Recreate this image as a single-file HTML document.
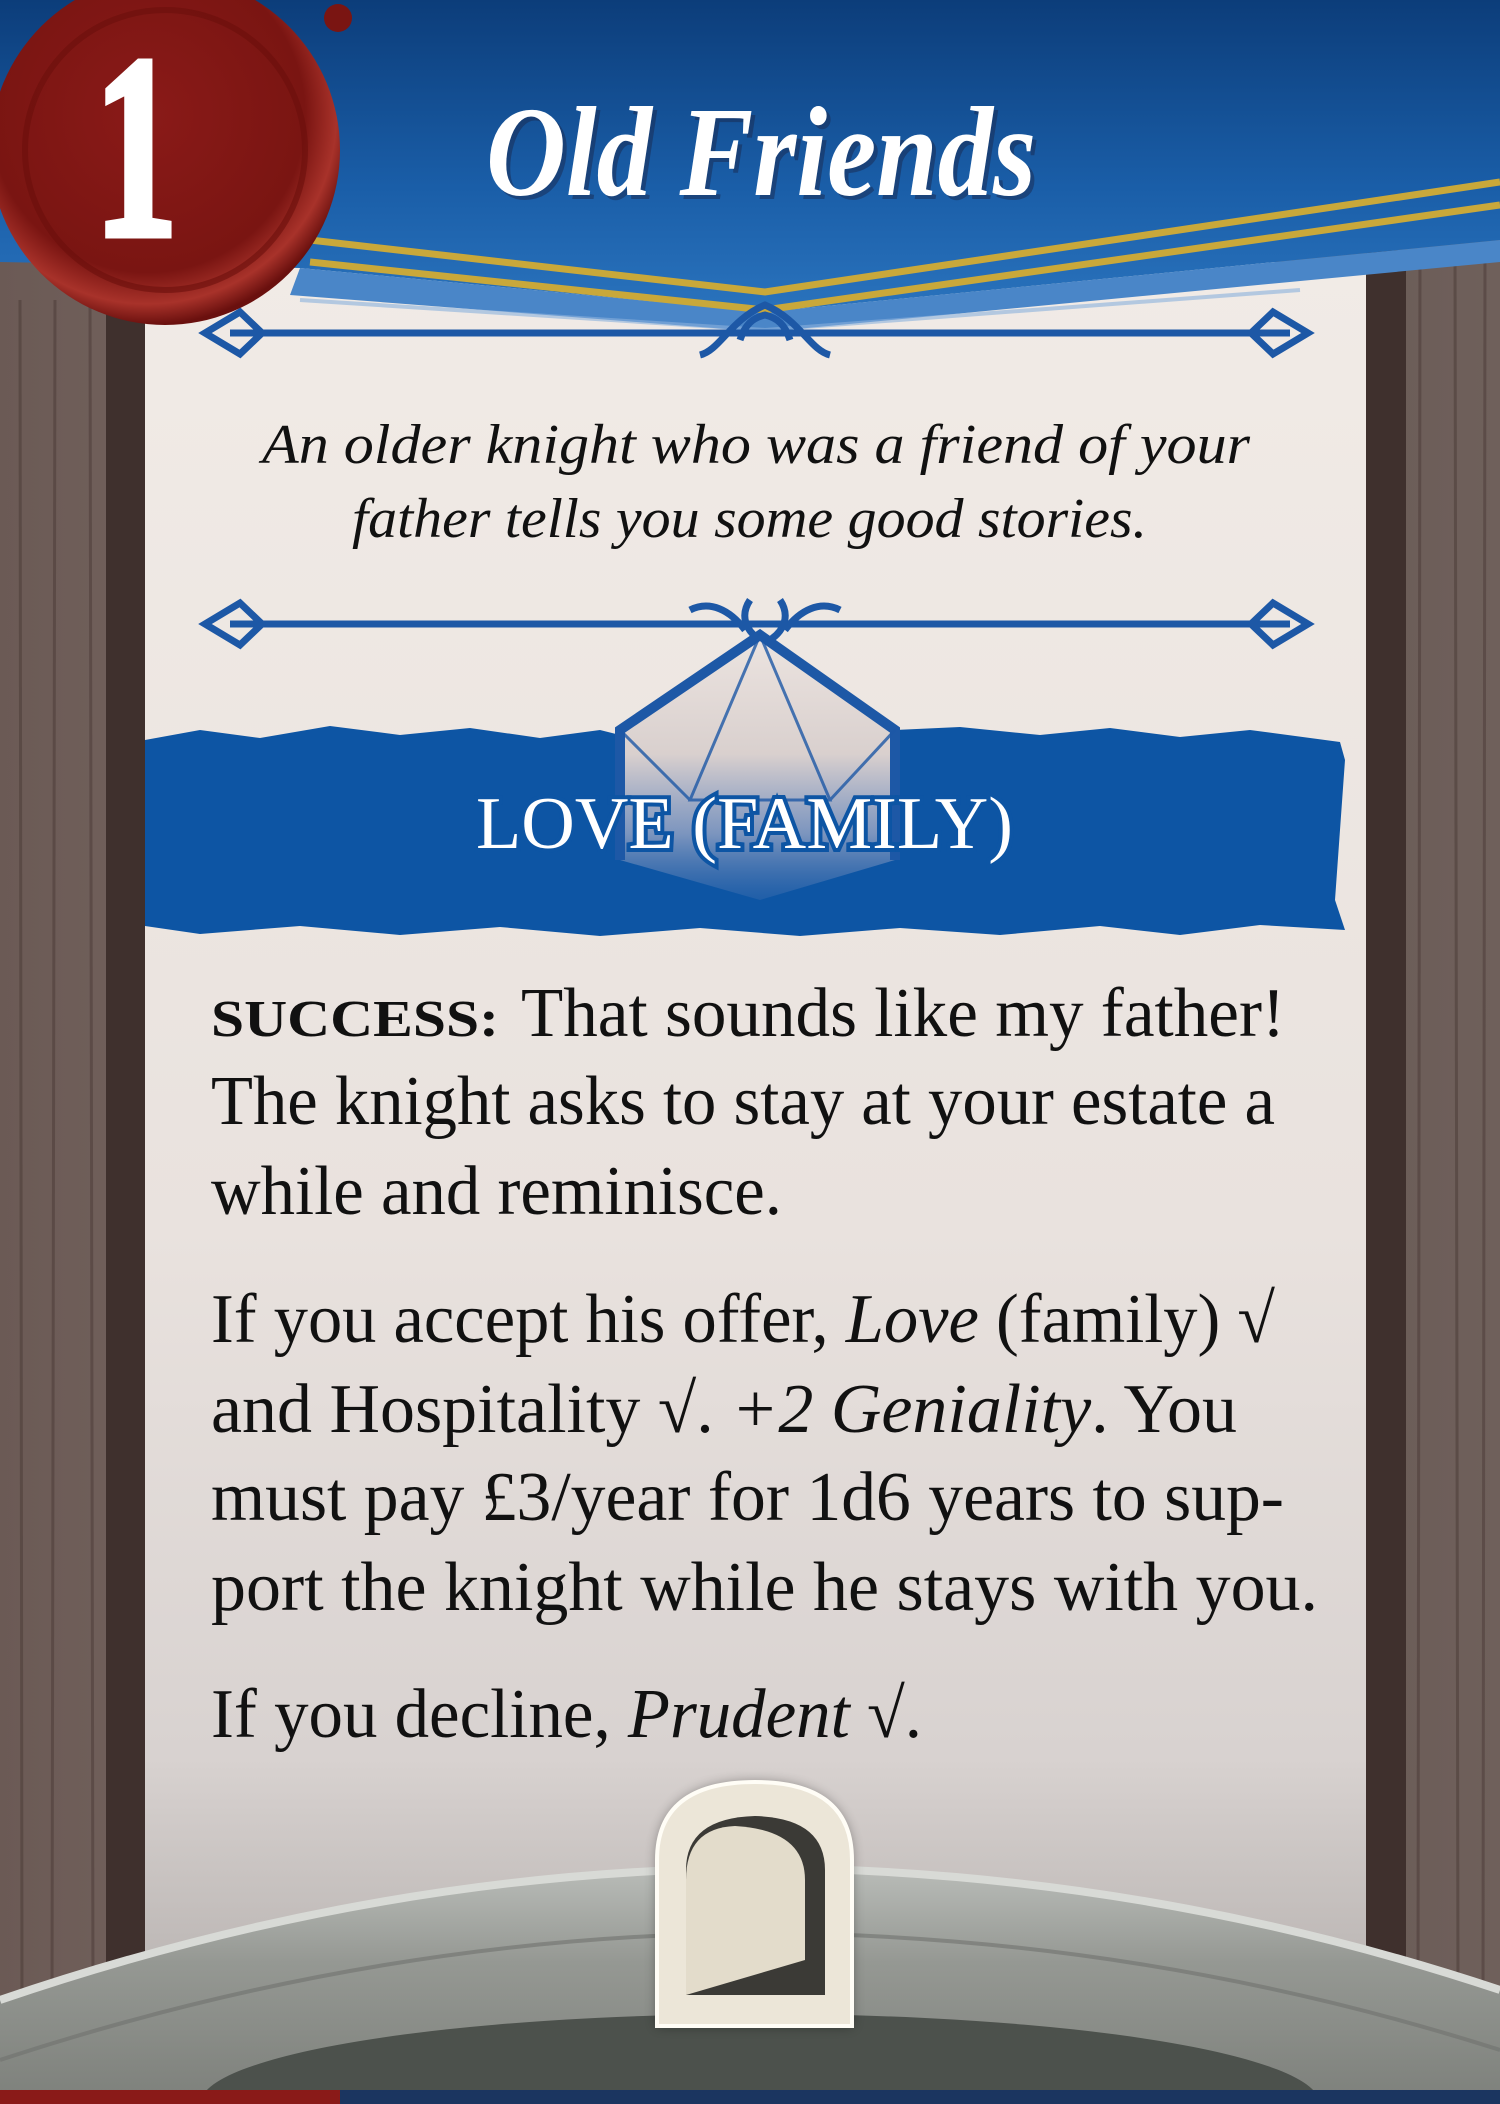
<!DOCTYPE html>
<html><head><meta charset="utf-8"><style>
html,body{margin:0;padding:0;background:#4a3d3a;}
svg{display:block}
</style></head><body>
<svg width="1500" height="2104" viewBox="0 0 1500 2104" xmlns="http://www.w3.org/2000/svg">
<defs>
<linearGradient id="wood" x1="0" x2="1" y1="0" y2="0">
<stop offset="0" stop-color="#6b5a55"/><stop offset="0.3" stop-color="#7d6d68"/><stop offset="0.6" stop-color="#5e4f4b"/><stop offset="1" stop-color="#6f605b"/>
</linearGradient>
<linearGradient id="parch" x1="0" x2="0" y1="0" y2="1">
<stop offset="0" stop-color="#f1ebe6"/><stop offset="0.55" stop-color="#e9e2de"/><stop offset="0.85" stop-color="#d8d2d0"/><stop offset="1" stop-color="#b5b0ae"/>
</linearGradient>
<linearGradient id="blue" x1="0" x2="0" y1="0" y2="1">
<stop offset="0" stop-color="#0c3d7a"/><stop offset="0.6" stop-color="#1a5ea8"/><stop offset="1" stop-color="#2a73bd"/>
</linearGradient>
<radialGradient id="seal" cx="0.45" cy="0.4" r="0.6">
<stop offset="0" stop-color="#8a1a18"/><stop offset="0.75" stop-color="#7a1512"/><stop offset="0.9" stop-color="#a8322a"/><stop offset="1" stop-color="#6a100e"/>
</radialGradient>
<linearGradient id="metal" x1="0" x2="0" y1="0" y2="1">
<stop offset="0" stop-color="#b9bcb8"/><stop offset="0.4" stop-color="#959893"/><stop offset="1" stop-color="#7d807b"/>
</linearGradient>
<linearGradient id="die" x1="0" x2="0" y1="0" y2="1">
<stop offset="0" stop-color="#ece4e0"/><stop offset="0.45" stop-color="#d9d0ce"/><stop offset="0.75" stop-color="#c6c0d0" stop-opacity="0.6"/><stop offset="1" stop-color="#6a84b8" stop-opacity="0.2"/>
</linearGradient>
<filter id="sh" x="-20%" y="-20%" width="140%" height="140%"><feGaussianBlur stdDeviation="6"/></filter>
</defs>

<!-- wood -->
<rect x="0" y="0" width="1500" height="2104" fill="url(#wood)"/>
<g stroke="#4a3a36" stroke-width="3" opacity="0.5">
<line x1="20" y1="300" x2="22" y2="2000"/><line x1="55" y1="300" x2="52" y2="2000"/><line x1="90" y1="300" x2="93" y2="2000"/>
<line x1="1420" y1="250" x2="1418" y2="2000"/><line x1="1455" y1="250" x2="1458" y2="2000"/><line x1="1485" y1="250" x2="1483" y2="2000"/>
</g>
<rect x="106" y="280" width="40" height="1700" fill="#3f302d"/>
<rect x="1366" y="250" width="40" height="1750" fill="#3f302d"/>

<!-- parchment -->
<rect x="145" y="262" width="1221" height="1760" fill="url(#parch)"/>

<!-- blue header -->
<path d="M0 0 H1500 V240 L765 312 L300 268 L0 262 Z" fill="url(#blue)"/>
<path d="M300 268 L765 312 L1500 240 V262 L765 332 L290 295 Z" fill="#4a86c8"/>
<path d="M310 240 L765 292 L1500 182" fill="none" stroke="#c9a83a" stroke-width="7"/>
<path d="M310 262 L765 310 L1500 205" fill="none" stroke="#c9a83a" stroke-width="7"/>
<path d="M300 300 L765 330 L1300 290" fill="none" stroke="#8ab0dc" stroke-width="4" opacity="0.6"/>

<!-- seal -->
<circle cx="165" cy="150" r="175" fill="url(#seal)"/>
<circle cx="165" cy="150" r="140" fill="none" stroke="#6a0f0c" stroke-width="6" opacity="0.6"/>
<circle cx="338" cy="18" r="14" fill="#7a1512"/>
<text x="94" y="235" font-family="Liberation Serif, serif" font-weight="bold" font-size="262" fill="#fff" stroke="#fff" stroke-width="7" textLength="84" lengthAdjust="spacingAndGlyphs">1</text>

<!-- title -->
<text x="490" y="199" font-family="Liberation Serif, serif" font-weight="bold" font-style="italic" font-size="128" fill="#1a2a50" opacity="0.5" textLength="550" lengthAdjust="spacingAndGlyphs">Old Friends</text>
<text x="486" y="195" font-family="Liberation Serif, serif" font-weight="bold" font-style="italic" font-size="128" fill="#fff" textLength="550" lengthAdjust="spacingAndGlyphs">Old Friends</text>

<!-- ornament 1 -->
<g fill="none" stroke="#1d58a6" stroke-width="7">
<line x1="230" y1="333" x2="1290" y2="333"/>
<path d="M205 333 L240 312 L262 333 L240 354 Z"/>
<path d="M1308 333 L1273 312 L1251 333 L1273 354 Z"/>
<path d="M700 355 C720 350 730 320 765 305 C800 320 810 350 830 355"/>
<path d="M740 340 C745 325 752 318 765 315 C778 318 785 325 790 340"/>
</g>
<!-- ornament 2 -->
<g fill="none" stroke="#1d58a6" stroke-width="7">
<line x1="230" y1="624" x2="1290" y2="624"/>
<path d="M205 624 L240 603 L262 624 L240 645 Z"/>
<path d="M1308 624 L1273 603 L1251 624 L1273 645 Z"/>
<path d="M690 610 C710 600 730 610 745 630"/><path d="M840 610 C820 600 800 610 785 630"/>
<path d="M750 600 C740 615 745 630 760 640"/><path d="M780 600 C790 615 785 630 770 640"/>
</g>

<!-- blue band -->
<path d="M145 740 L200 730 L260 738 L330 726 L400 735 L470 728 L540 738 L600 730 L620 735 L895 730 L960 727 L1040 735 L1110 728 L1180 737 L1250 730 L1340 742 L1345 760 L1335 900 L1345 930 L1260 925 L1180 935 L1100 926 L1000 935 L900 928 L800 936 L700 928 L600 936 L500 927 L400 935 L300 926 L200 934 L145 926 Z" fill="#0d55a4"/>

<!-- die -->
<path d="M620 730 L760 635 L895 730 L895 860 L760 900 L620 860 Z" fill="url(#die)"/>
<path d="M620 860 L620 730 L760 635 L895 730 L895 860" fill="none" stroke="#1d58a6" stroke-width="10"/>
<g fill="none" stroke="#1d58a6" stroke-width="3" opacity="0.8">
<path d="M760 635 L690 800 L830 800 Z"/><path d="M620 730 L690 800"/><path d="M895 730 L830 800"/>
</g>
<text x="476" y="848" font-family="Liberation Serif, serif" font-size="74" fill="#fff" stroke="#0d55a4" stroke-width="8" paint-order="stroke" textLength="537" lengthAdjust="spacingAndGlyphs">LOVE (FAMILY)</text>

<!-- italic flavor -->
<g font-family="Liberation Serif, serif" font-style="italic" font-size="56" fill="#111">
<text x="262" y="463" textLength="988" lengthAdjust="spacingAndGlyphs">An older knight who was a friend of your</text>
<text x="352" y="537" textLength="795" lengthAdjust="spacingAndGlyphs">father tells you some good stories.</text>
</g>

<!-- body -->
<g font-family="Liberation Serif, serif" font-size="70" fill="#111">
<text x="211" y="1036" font-weight="bold" font-size="52" textLength="288" lengthAdjust="spacingAndGlyphs">SUCCESS:</text>
<text x="521" y="1036" textLength="764" lengthAdjust="spacingAndGlyphs">That sounds like my father!</text>
<text x="211" y="1124" textLength="1064" lengthAdjust="spacingAndGlyphs">The knight asks to stay at your estate a</text>
<text x="211" y="1214" textLength="571" lengthAdjust="spacingAndGlyphs">while and reminisce.</text>
<text x="211" y="1342" textLength="1064" lengthAdjust="spacingAndGlyphs">If you accept his offer, <tspan font-style="italic">Love</tspan> (family) √</text>
<text x="211" y="1432" textLength="1026" lengthAdjust="spacingAndGlyphs">and Hospitality √. <tspan font-style="italic">+2 Geniality</tspan>. You</text>
<text x="211" y="1520" textLength="1073" lengthAdjust="spacingAndGlyphs">must pay £3/year for 1d6 years to sup-</text>
<text x="211" y="1610" textLength="1107" lengthAdjust="spacingAndGlyphs">port the knight while he stays with you.</text>
<text x="211" y="1737" textLength="711" lengthAdjust="spacingAndGlyphs">If you decline, <tspan font-style="italic">Prudent</tspan> √.</text>
</g>

<!-- metal bottom -->
<path d="M0 2000 Q380 1870 760 1868 Q1140 1870 1500 1990 V2104 H0 Z" fill="url(#metal)"/>
<path d="M0 2000 Q380 1870 760 1868 Q1140 1870 1500 1990" fill="none" stroke="#d8dad6" stroke-width="8"/>
<path d="M0 2060 Q380 1935 760 1933 Q1140 1935 1500 2050" fill="none" stroke="#6f726e" stroke-width="4" opacity="0.6"/>
<ellipse cx="760" cy="2104" rx="560" ry="90" fill="#4c514c"/>
<rect x="0" y="2090" width="1500" height="14" fill="#1b3560"/>
<rect x="0" y="2090" width="340" height="14" fill="#8a1a18"/>

<!-- door -->
<path d="M657 2026 V1860 Q657 1782 755 1782 Q852 1782 852 1860 V2026 Z" fill="#000" opacity="0.4" filter="url(#sh)"/>
<path d="M657 2026 V1860 Q657 1782 755 1782 Q852 1782 852 1860 V2026 Z" fill="#ece6d8" stroke="#fffdf6" stroke-width="4"/>
<path d="M686 1995 V1870 Q686 1818 755 1816 Q825 1818 825 1870 V1995 Z" fill="#3b3a36"/>
<path d="M686 1995 V1880 Q686 1828 735 1826 Q805 1830 805 1880 V1960 Z" fill="#e3dccb"/>
</svg>
</body></html>
